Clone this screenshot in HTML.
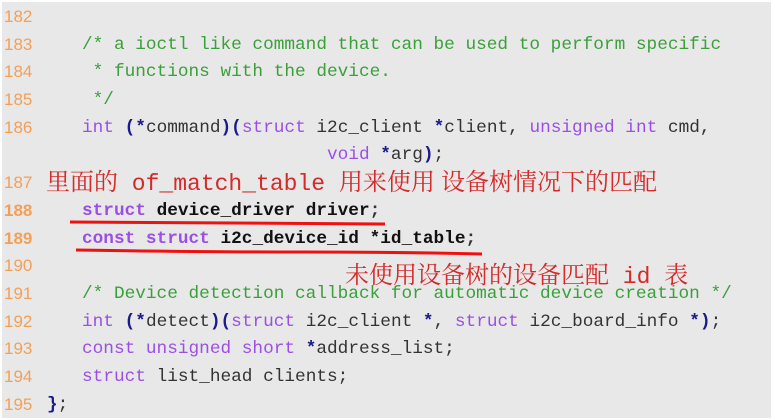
<!DOCTYPE html>
<html><head><meta charset="utf-8"><style>
body{margin:0;width:775px;height:420px;background:#fff;overflow:hidden}
#bg{position:absolute;left:2px;top:2px;width:769px;height:416px;background:#e8e8e8}
.l{position:absolute;left:0;height:28px;line-height:28px;white-space:pre;font-family:"Liberation Mono",monospace;font-size:17.75px;color:#333}
.n{position:absolute;left:4px;width:40px;font-family:"Liberation Sans",sans-serif;font-size:17px;color:#f2a057}
.b{font-weight:bold}
.c{position:absolute;left:82px}
.k{color:#9b4fe6}
.g{color:#3aa03a}
.p{color:#1a1a8c;font-weight:bold}
.d{color:#111;font-weight:bold}
.ann{position:absolute;white-space:pre;color:#d42a2a;font-family:"Liberation Mono","Noto Serif CJK SC",serif;font-size:23px;line-height:30px}
.ann .cj{font-family:"Noto Serif CJK SC",serif;font-size:24px}
</style></head><body>
<div id="bg"></div>
<div class="l" style="top:3px"><span class="n">182</span></div>
<div class="l" style="top:31px"><span class="n">183</span><span class="c g">/* a ioctl like command that can be used to perform specific</span></div>
<div class="l" style="top:58px"><span class="n">184</span><span class="c g"> * functions with the device.</span></div>
<div class="l" style="top:86px"><span class="n">185</span><span class="c g"> */</span></div>
<div class="l" style="top:114px"><span class="n">186</span><span class="c"><span class="k">int</span> <span class="p">(*</span>command<span class="p">)(</span><span class="k">struct</span> i2c_client <span class="p">*</span>client, <span class="k">unsigned int</span> cmd,</span></div>
<div class="l" style="top:141px"><span class="c">                       <span class="k">void</span> <span class="p">*</span>arg<span class="p">)</span>;</span></div>
<div class="l" style="top:169px"><span class="n">187</span></div>
<div class="ann" style="left:46px;top:165px"><span class="cj">里面的</span> of_match_table <span class="cj">用来使用 设备树情况下的匹配</span></div>
<div class="l" style="top:197px"><span class="n b">188</span><span class="c b"><span class="k">struct</span> <span class="d">device_driver driver</span>;</span></div>
<div class="l" style="top:225px"><span class="n b">189</span><span class="c b"><span class="k">const struct</span> <span class="d">i2c_device_id *id_table</span>;</span></div>
<svg style="position:absolute;left:0;top:0" width="775" height="420"><path d="M70 222 L385 224" stroke="#f01010" stroke-width="3" fill="none"/><path d="M76 250 Q200 252 300 252 T482 254" stroke="#f01010" stroke-width="3" fill="none"/></svg>
<div class="l" style="top:252px"><span class="n">190</span></div>
<div class="ann" style="left:345px;top:258px"><span class="cj">未使用设备树的设备匹配</span> id <span class="cj">表</span></div>
<div class="l" style="top:280px"><span class="n">191</span><span class="c g">/* Device detection callback for automatic device creation */</span></div>
<div class="l" style="top:308px"><span class="n">192</span><span class="c"><span class="k">int</span> <span class="p">(*</span>detect<span class="p">)(</span><span class="k">struct</span> i2c_client <span class="p">*</span>, <span class="k">struct</span> i2c_board_info <span class="p">*)</span>;</span></div>
<div class="l" style="top:335px"><span class="n">193</span><span class="c"><span class="k">const unsigned short</span> <span class="p">*</span>address_list;</span></div>
<div class="l" style="top:363px"><span class="n">194</span><span class="c"><span class="k">struct</span> list_head clients;</span></div>
<div class="l" style="top:391px"><span class="n">195</span><span style="position:absolute;left:47px"><span class="p">}</span>;</span></div>
</body></html>
